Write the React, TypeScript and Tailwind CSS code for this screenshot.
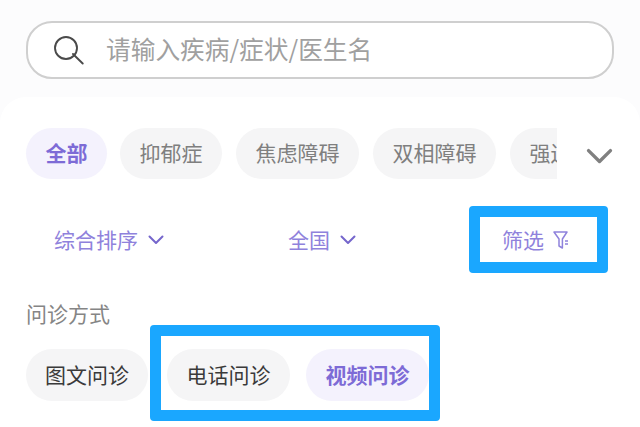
import React from "react";

const font = { fontFamily: '"Noto Sans CJK SC", sans-serif' };

function Chip({ label, active, dark, w }: { label: string; active?: boolean; dark?: boolean; w: string }) {
  return (
    <div
      className={`${w} shrink-0 rounded-[26px] flex items-center justify-center pb-[2px] text-[21px] leading-none ${
        active ? "bg-[#f4f2fd] text-[#7d6bd6] font-bold" : dark ? "bg-[#f5f5f6] text-[#3a3a3a]" : "bg-[#f5f5f6] text-[#7f7f7f]"
      }`}
    >
      {label}
    </div>
  );
}

function Chevron({ className }: { className: string }) {
  return (
    <svg viewBox="0 0 16 10" className={className} fill="none" stroke="currentColor" strokeWidth="2" strokeLinecap="round" strokeLinejoin="round">
      <path d="M1.5 1.5 8 8l6.5-6.5" />
    </svg>
  );
}

export default function App() {
  return (
    <div className="relative w-[640px] h-[427px] overflow-hidden bg-[#fcfcfd]" style={font}>
      <div className="pt-[21px] pl-[26px]">
        <div className="w-[588px] h-[58px] rounded-[26px] border-2 border-[#cfcfcf] bg-white flex items-center pl-[26px]">
          <svg viewBox="0 0 30 30" className="w-[30px] h-[30px] text-[#4a4a4a]" fill="none" stroke="currentColor" strokeWidth="1.9" strokeLinecap="round">
            <circle cx="12" cy="13" r="11" />
            <path d="M19 19 28.7 28.5" />
          </svg>
          <span className="ml-[22px] mb-[3px] text-[24.7px] leading-none text-[#a0a0a0]">请输入疾病/症状/医生名</span>
        </div>
      </div>

      <div className="mt-[18px] h-[340px] rounded-t-[26px] bg-white pt-[31px]">
        <div className="flex items-center h-[51px]">
          <div className="w-[557px] h-full pl-[26px] overflow-hidden flex">
            <Chip label="全部" active w="w-[81px]" />
            <Chip label="抑郁症" w="w-[102px] ml-[13px]" />
            <Chip label="焦虑障碍" w="w-[123px] ml-[14px]" />
            <Chip label="双相障碍" w="w-[123px] ml-[14px]" />
            <Chip label="强迫症" w="w-[102px] ml-[14px]" />
          </div>
          <Chevron className="ml-[29px] mt-[5px] w-[27px] h-[17px] text-[#808080]" />
        </div>

        <div className="flex items-center h-[36px] mt-[43px] text-[21px] leading-none text-[#8f82dc]">
          <span className="ml-[54px] mb-[2px]">综合排序</span>
          <Chevron className="ml-[10px] w-[16px] h-[10px] text-[#7566cc]" />
          <span className="ml-[124px] mb-[2px]">全国</span>
          <Chevron className="ml-[10px] w-[16px] h-[10px] text-[#7566cc]" />
          <span className="ml-[146px] mb-[2px]">筛选</span>
          <svg viewBox="0 0 16 18" className="ml-[9px] w-[16px] h-[18px] text-[#8f82dc]" fill="none" stroke="currentColor" strokeWidth="1.5" strokeLinejoin="round">
            <path d="M1 1h13L9.4 8v9L6 15V8z" />
            <path d="M12 10h3M12 13h3" />
          </svg>
        </div>

        <div className="mt-[40px] ml-[26px] text-[21px] leading-[30px] text-[#858585]">问诊方式</div>

        <div className="mt-[21px] h-[52px] pl-[26px] flex">
          <Chip label="图文问诊" dark w="w-[122px]" />
          <Chip label="电话问诊" dark w="w-[123px] ml-[19px]" />
          <Chip label="视频问诊" active w="w-[123px] ml-[16px]" />
        </div>
      </div>

      <div className="absolute left-[469px] top-[206px] w-[139px] h-[67px] border-[11px] border-[#1aa7ff] rounded-[4px]" />
      <div className="absolute left-[150px] top-[325px] w-[290px] h-[96px] border-[11px] border-[#1aa7ff] rounded-[4px]" />
    </div>
  );
}
